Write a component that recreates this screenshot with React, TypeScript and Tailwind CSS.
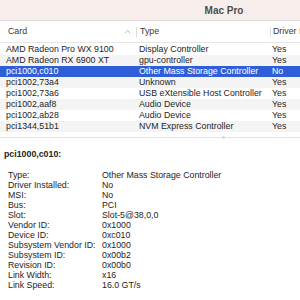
const rows = [
  { card: 'AMD Radeon Pro WX 9100', type: 'Display Controller', driver: 'Yes' },
  { card: 'AMD Radeon RX 6900 XT', type: 'gpu-controller', driver: 'Yes' },
  { card: 'pci1000,c010', type: 'Other Mass Storage Controller', driver: 'No' },
  { card: 'pci1002,73a4', type: 'Unknown', driver: 'Yes' },
  { card: 'pci1002,73a6', type: 'USB eXtensible Host Controller', driver: 'Yes' },
  { card: 'pci1002,aaf8', type: 'Audio Device', driver: 'Yes' },
  { card: 'pci1002,ab28', type: 'Audio Device', driver: 'Yes' },
  { card: 'pci1344,51b1', type: 'NVM Express Controller', driver: 'Yes' },
]

const details = [
  ['Type:', 'Other Mass Storage Controller'],
  ['Driver Installed:', 'No'],
  ['MSI:', 'No'],
  ['Bus:', 'PCI'],
  ['Slot:', 'Slot-5@38,0,0'],
  ['Vendor ID:', '0x1000'],
  ['Device ID:', '0xc010'],
  ['Subsystem Vendor ID:', '0x1000'],
  ['Subsystem ID:', '0x00b2'],
  ['Revision ID:', '0x00b0'],
  ['Link Width:', 'x16'],
  ['Link Speed:', '16.0 GT/s'],
]

export default function App() {
  return (
    <div
      className="h-[300px] w-[300px] overflow-hidden bg-white text-[#242424]"
      style={{ fontFamily: '"Liberation Sans", Arial, sans-serif' }}
    >
      <div className="w-[448px]">
        {/* title bar */}
        <div className="flex h-[21px] items-center justify-center border-b border-[#e4dcda] bg-[#f7edeb] text-[10px] font-bold text-[#4d4d4d]">
          Mac Pro
        </div>

        {/* table header */}
        <div className="flex h-[22px] items-center whitespace-nowrap border-b border-[#e6e6e6] text-[8.8px] text-[#3a3a3a]">
          <div className="flex w-[136px] items-center justify-between pl-[8px] pr-[5px]">
            <span>Card</span>
            <svg width="7" height="5" viewBox="0 0 7 5" className="text-[#b4b4b4]">
              <path d="M1 4 L3.5 1.5 L6 4" fill="none" stroke="currentColor" strokeWidth="1" />
            </svg>
          </div>
          <div className="h-[10px] w-px bg-[#dcdcdc]" />
          <div className="w-[133px] pl-[3px]">Type</div>
          <div className="h-[10px] w-px bg-[#dcdcdc]" />
          <div className="pl-[2px]">Driver Installed</div>
        </div>

        {/* rows */}
        <div className="h-[94px] pt-[1px]">
          {rows.map((r, i) => {
            const selected = i === 2
            const bg = selected ? 'bg-[#2e5fd8] text-white' : i % 2 === 1 ? 'bg-[#f4f4f4]' : 'bg-white'
            return (
              <div key={i} className={`flex h-[11px] items-center whitespace-nowrap text-[8.8px] leading-none ${bg}`}>
                <div className="w-[139px] pl-[6px]">{r.card}</div>
                <div className="w-[133px]">{r.type}</div>
                <div>{r.driver}</div>
              </div>
            )
          })}
        </div>

        {/* splitter */}
        <div className="relative h-px bg-[#e4e4e4]">
          <div className="absolute left-[222px] top-[-1px] h-[3px] w-[3px] rounded-full bg-[#d6d6d6]" />
        </div>

        {/* detail */}
        <div className="pl-[4px] pt-[11px] text-[8.8px]">
          <div className="font-bold leading-[11px]">pci1000,c010:</div>
          <div className="mt-[10px] pl-[4px]">
            {details.map(([k, v]) => (
              <div key={k} className="flex h-[10px] items-center whitespace-nowrap leading-none">
                <div className="w-[94px]">{k}</div>
                <div>{v}</div>
              </div>
            ))}
          </div>
        </div>
      </div>
    </div>
  )
}
